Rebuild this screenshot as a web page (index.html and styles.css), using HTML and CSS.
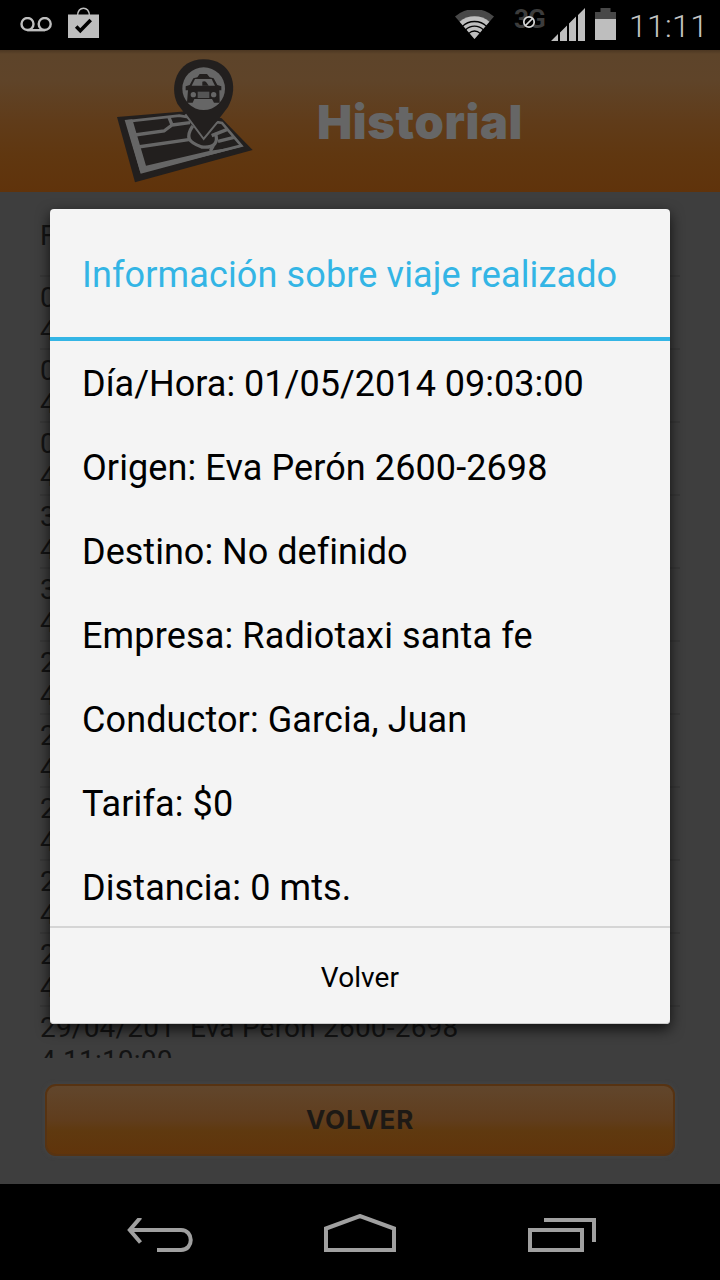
FILE: index.html
```html
<!DOCTYPE html>
<html lang="es">
<head>
<meta charset="utf-8">
<title>Historial</title>
<link rel="stylesheet" href="styles.css">
</head>
<body>
<div class="status-bar">
  <svg class="voicemail" width="32" height="16" viewBox="0 0 32 16" fill="none" stroke="#bebebe" stroke-width="2.4"><circle cx="7.5" cy="7" r="6"/><circle cx="24.7" cy="7" r="6"/><path d="M7.500 13.200H24.700"/></svg>
  <svg class="bag" width="31" height="31" viewBox="0 0 31 31"><path d="M9.500 9C9.500-1.500 21.500-1.500 21.500 9" fill="none" stroke="#bebebe" stroke-width="1.500"/><path d="M0 7.500H31V31H0Z" fill="#bebebe"/><path d="M8.200 19.500L12.300 23.700L22.700 13" fill="none" stroke="#000" stroke-width="3.600"/></svg>
  <span class="spacer"></span>
  <svg class="wifi" width="39" height="30" viewBox="0 0 39 30"><path d="M19.500 29L0 6.500A29.500 29.500 0 0 1 39 6.500Z" fill="#484848"/><path d="M19.500 29L4.600 11.700A23 23 0 0 1 34.400 11.700Z" fill="#bebebe"/><g fill="none" stroke="#000"><circle cx="19.500" cy="29" r="17.500" stroke-width="1.300"/><circle cx="19.500" cy="29" r="12.800" stroke-width="1.300"/><circle cx="19.500" cy="29" r="8" stroke-width="1.300"/></g></svg>
  <span class="network">3G<svg class="no-data" width="14" height="14" viewBox="0 0 14 14"><circle cx="7" cy="7" r="5.200" fill="#000" stroke="#d8d8d8" stroke-width="1.700"/><path d="M3.500 10.500L10.500 3.500" stroke="#d8d8d8" stroke-width="1.700"/></svg></span>
  <svg class="signal" width="35" height="33" viewBox="0 0 35 33" fill="#bebebe"><path d="M0 33L7 26V33ZM9 24.500L16 17.500V33H9ZM18 15.500L25 8.500V33H18ZM27 7L34 0V33H27Z"/></svg>
  <svg class="battery" width="21" height="32" viewBox="0 0 21 32"><path d="M0 4H5.500V0H15.500V4H21V11H0Z" fill="#484848"/><path d="M0 11H21V32H0Z" fill="#bebebe"/></svg>
  <span class="clock">11:11</span>
</div>
<div class="screen">
  <div class="app-header">
    <svg class="map-icon" width="136" height="125" viewBox="51 39 408 375">
      <path d="M51 216L260 199L365 220L458 315L105 412Z" fill="#221f1e"/>
      <path d="M82 229L238 212L366 234L424 302L124 378Z" fill="#221f1e" stroke="#666" stroke-width="8"/>
      <path d="M74 225L97 223L138 362L330 317L432 303L122 386Z" fill="#666"/>
      <g fill="none" stroke="#666" stroke-width="10"><path d="M104 270L192 258L216 240L207 217M216 240L270 233M114 306L271 283M354 289L402 277M335 272L382 253M340 302L331 318"/><path d="M278 243C255 278 266 292 305 306C344 310 357 291 345 264"/></g>
      <path d="M311 282L232 176C207 126 229 43 311 43S420 122 384 186Z" fill="#221f1e"/>
      <path d="M256 208L311 282L352 232" fill="none" stroke="#666" stroke-width="6"/>
      <circle cx="311" cy="131" r="64" fill="#666"/>
      <path d="M292 97L299 87H321L329 97L341 100L352 120L364 124V136H358L359 173H342L336 162H283L278 173H261L264 136H257V124L269 120L280 100Z" fill="#221f1e"/>
      <path d="M275 122L285 102H335L345 122Z" fill="#666"/><path d="M307 122V110Q314 106 320 113L326 122Z" fill="#221f1e"/>
      <circle cx="280" cy="149" r="8" fill="#666"/><circle cx="341" cy="149" r="8" fill="#666"/><path d="M293 140H328V159H293Z" fill="#555"/>
    </svg>
    <h1 class="app-title">Historial</h1>
  </div>
  <div class="trips">
    <div class="trips-head">F</div>
    <div class="trip"><span>0<br>4</span></div>
    <div class="trip"><span>0<br>4</span></div>
    <div class="trip"><span>0<br>4</span></div>
    <div class="trip"><span>3<br>4</span></div>
    <div class="trip"><span>3<br>4</span></div>
    <div class="trip"><span>2<br>4</span></div>
    <div class="trip"><span>2<br>4</span></div>
    <div class="trip"><span>2<br>4</span></div>
    <div class="trip"><span>2<br>4</span></div>
    <div class="trip"><span>2<br>4</span></div>
    <div class="trip"><span>29/04/201<br>4 11:10:00</span><span>Eva Peron 2600-2698</span></div>
  </div>
  <div class="back-button">VOLVER</div>
</div>
<div class="nav-bar">
  <svg class="nav-back" width="68" height="36" viewBox="0 0 68 36" fill="none" stroke="#a0a0a0" stroke-width="4"><path d="M3 12H54C67 12 67 32 54 32H30"/><path d="M13.500-.5L2.800 12L13.500 24.500"/></svg>
  <svg class="nav-home" width="72" height="38" viewBox="0 0 72 38" fill="none" stroke="#a0a0a0" stroke-width="4"><path d="M2 36V14.500L36 2L70 14.500V36Z"/></svg>
  <svg class="nav-recent" width="68" height="34" viewBox="0 0 68 34" fill="none" stroke="#a0a0a0" stroke-width="4"><path d="M2 12H54V32H2ZM16 2H66V24"/></svg>
</div>
<div class="dialog">
  <div class="dialog-title">Información sobre viaje realizado</div>
  <div class="dialog-body">
    <p class="tight">Día/Hora: 01/05/2014 09:03:00</p>
    <p>Origen: Eva Perón 2600-2698</p>
    <p class="tight">Destino: No definido</p>
    <p class="wide">Empresa: Radiotaxi santa fe</p>
    <p>Conductor: Garcia, Juan</p>
    <p>Tarifa: $0</p>
    <p>Distancia: 0 mts.</p>
  </div>
  <div class="dialog-action">Volver</div>
</div>
</body>
</html>
```
FILE: styles.css
```css
* { box-sizing: border-box; }
body {
  margin: 0;
  width: 720px;
  height: 1280px;
  position: relative;
  overflow: hidden;
  display: flex;
  flex-direction: column;
  background: #000;
  font-family: Roboto, "Noto Sans", sans-serif;
}
svg { display: block; flex: none; }
.status-bar {
  height: 50px;
  display: flex;
  align-items: flex-start;
  padding: 7px 0 0 20px;
  background: #000;
}
.voicemail { margin-top: 10px; }
.bag { margin-left: 16px; }
.spacer { flex: 1; }
.wifi { margin: 3px 20px 0 0; }
.network {
  position: relative;
  width: 37px;
  font-size: 26px;
  font-weight: 700;
  line-height: 24px;
  letter-spacing: -1px;
  color: #3c3c3c;
}
.no-data { position: absolute; left: 8px; top: 8px; }
.signal { margin-top: 1px; }
.battery { margin: 1px 0 0 9px; }
.clock {
  width: 104px;
  padding-left: 13px;
  font-size: 32px;
  font-weight: 300;
  line-height: 38px;
  letter-spacing: .3px;
  color: #c4c4c4;
}
.screen {
  height: 1134px;
  background: #3e3e3e;
}
.app-header {
  height: 142px;
  display: flex;
  align-items: flex-start;
  padding: 8px 0 0 117px;
  background: linear-gradient(#4c3722 0, #5d442a 4px, #5f4429 30px, #603c1a 70px, #603710 105px, #60330b 100%);
}
.app-title {
  margin: 36px 0 0 64px;
  font-family: Inter, sans-serif;
  font-size: 47px;
  font-weight: 900;
  line-height: 56px;
  letter-spacing: .6px;
  color: #666;
}
.trips {
  height: 866px;
  margin: 0 40px;
  overflow: hidden;
  font-size: 28px;
  line-height: 33px;
  letter-spacing: .2px;
  color: #131313;
}
.trips-head { height: 85px; padding-top: 27px; border-bottom: 2px solid #383838; }
.trip {
  height: 73px;
  display: flex;
  padding-top: 4px;
  border-bottom: 2px solid #383838;
}
.trip span:first-child { width: 150px; white-space: nowrap; }
.back-button {
  width: 630px;
  height: 72px;
  margin: 26px 45px 0;
  border: 2px solid #573312;
  border-radius: 11px;
  box-shadow: 0 0 4px #484848;
  background: linear-gradient(#61462c, #603d1d 50%, #5f390f 66%, #60340b);
  color: #1d1915;
  font: 750 26px/68px Inter, sans-serif;
  letter-spacing: .8px;
  text-align: center;
}
.nav-bar {
  height: 96px;
  display: flex;
  align-items: flex-end;
  padding: 0 0 28px 127px;
}
.nav-back { margin-bottom: -2px; }
.nav-home { margin-left: 129px; }
.nav-recent { margin-left: 132px; }
.dialog {
  position: absolute;
  left: 50px;
  top: 209px;
  width: 620px;
  height: 815px;
  border-radius: 4px;
  background: #f4f4f4;
  box-shadow: 0 5px 14px rgba(0, 0, 0, .75), inset 0 -1px #ccc;
  color: #000;
  font-size: 36px;
}
.dialog-title {
  height: 132px;
  padding: 0 32px;
  line-height: 132px;
  border-bottom: 4px solid #33b5e5;
  letter-spacing: .13px;
  color: #33b5e5;
  white-space: nowrap;
}
.dialog-body {
  height: 585px;
  padding: 1px 0 0 32px;
  overflow: hidden;
  letter-spacing: .1px;
}
.dialog-body p { margin: 0; line-height: 84px; white-space: nowrap; }
.dialog-body .tight { letter-spacing: .02px; }
.dialog-body .wide { letter-spacing: .15px; }
.dialog-action {
  height: 98px;
  border-top: 2px solid #d5d5d5;
  font-size: 28px;
  line-height: 100px;
  letter-spacing: .1px;
  text-align: center;
}
```
